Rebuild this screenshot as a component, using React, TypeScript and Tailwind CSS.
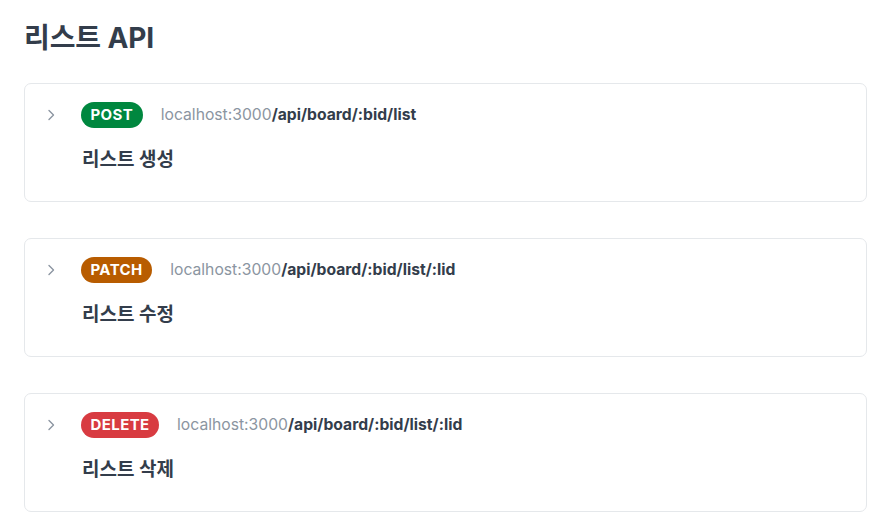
import React from "react";

const items = [
  { method: "POST", color: "bg-[#00873f]", path: "/api/board/:bid/list", title: "리스트 생성" },
  { method: "PATCH", color: "bg-[#b85c00]", path: "/api/board/:bid/list/:lid", title: "리스트 수정" },
  { method: "DELETE", color: "bg-[#d83b41]", path: "/api/board/:bid/list/:lid", title: "리스트 삭제" },
];

function Chevron() {
  return (
    <svg width="10" height="12" viewBox="0 0 10 12" fill="none" className="shrink-0">
      <path d="M3 1.5 L7.5 6 L3 10.5" stroke="#8b95a1" strokeWidth="1.4" strokeLinecap="round" strokeLinejoin="round" />
    </svg>
  );
}

export default function App() {
  return (
    <div
      className="bg-white w-[886px] h-[532px] overflow-hidden pl-6 pr-[19px] pt-[19px]"
      style={{ fontFamily: "Inter, 'Noto Sans CJK KR', sans-serif" }}
    >
      <h1 className="text-[28px] font-bold text-[#333d4b] leading-[38px] tracking-[-0.1px]">리스트 API</h1>
      <div className="mt-[26px] flex flex-col gap-[36px]">
        {items.map((it) => (
          <div key={it.method} className="h-[119px] border border-[#e5e8eb] rounded-[7px] pt-[18px] pl-[21px]">
            <div className="flex items-center h-[26px]">
              <Chevron />
              <div className={`ml-[25px] ${it.color} h-[26px] rounded-full px-[9.5px] flex items-center text-white text-[15px] font-bold tracking-[0.4px]`}>
                {it.method}
              </div>
              <div className="ml-[18px] text-[15.7px] leading-[26px]">
                <span className="text-[#8b95a1]">localhost:3000</span>
                <span className="text-[#333d4b] font-bold">{it.path}</span>
              </div>
            </div>
            <div className="mt-[18px] ml-[36px] text-[19px] font-bold text-[#333d4b] leading-[28px]">{it.title}</div>
          </div>
        ))}
      </div>
    </div>
  );
}
